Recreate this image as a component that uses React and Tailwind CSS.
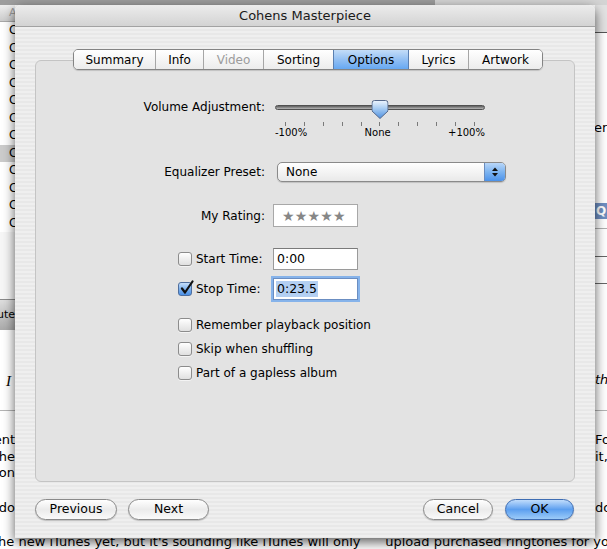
import React from "react";

function Checkbox({ checked }) {
  if (checked) {
    return (
      <div className="relative w-[14px] h-[14px] shrink-0 rounded-[3px] border border-[#4e6e9e] bg-linear-to-b from-[#c6def9] via-[#7fb3ee] to-[#4a8fe6]">
        <svg className="absolute -top-[3px] left-[1px]" width="14" height="15" viewBox="0 0 14 15">
          <path d="M2 8.5 L5 12.5 L12.5 1.5" fill="none" stroke="#111" strokeWidth="2.2" strokeLinecap="round" strokeLinejoin="round" />
        </svg>
      </div>
    );
  }
  return (
    <div className="w-[14px] h-[14px] shrink-0 rounded-[3px] border border-[#8c8c8c] bg-linear-to-b from-[#ffffff] to-[#e0e0e0] shadow-[0_1px_0_rgba(255,255,255,0.6)]" />
  );
}

function Tab({ label, className }) {
  return (
    <div className={className}>
      <span>{label}</span>
    </div>
  );
}

function PillButton({ children, className }) {
  return (
    <div className={className}>
      <span>{children}</span>
    </div>
  );
}

function Knob() {
  return (
    <svg width="17" height="19" viewBox="0 0 17 19">
      <defs>
        <linearGradient id="kg" x1="0" y1="0" x2="0" y2="1">
          <stop offset="0" stopColor="#eef5fd" />
          <stop offset="0.45" stopColor="#a6cbf2" />
          <stop offset="1" stopColor="#4e90e0" />
        </linearGradient>
      </defs>
      <path d="M3 0.5 H14 A2.5 2.5 0 0 1 16.5 3 V11 L8.5 18.5 L0.5 11 V3 A2.5 2.5 0 0 1 3 0.5 Z" fill="url(#kg)" stroke="#56698b" />
    </svg>
  );
}

export default function App() {
  const rows = Array.from({ length: 12 });
  const ticks = Array.from({ length: 11 });
  return (
    <div className="relative w-[607px] h-[549px] overflow-hidden bg-white font-['DejaVu_Sans',sans-serif] text-black flex flex-col">
      {/* top strip of background window */}
      <div className="h-[5px] shrink-0 flex">
        <div className="w-[435px] bg-[#9d9d9d]" />
        <div className="flex-1 bg-[#d4d4d4]" />
      </div>

      {/* background page columns */}
      <div className="flex h-[526px] shrink-0">
        {/* left column */}
        <div className="w-[15px] flex flex-col">
          <div className="h-[17px] shrink-0 bg-linear-to-b from-[#eeeeee] to-[#cccccc] border-b border-[#a8a8a8] pl-[9px] text-[11px] leading-[16px] text-[#9a9a9a]">A</div>
          {rows.map((_, i) => (
            <div
              key={i}
              className={i === 7 ? "h-[17.5px] shrink-0 bg-[#cbcbcb] pl-[9px] text-[12px] leading-[17.5px]" : "h-[17.5px] shrink-0 bg-white pl-[9px] text-[12px] leading-[17.5px]"}
            >
              C
            </div>
          ))}
          <div className="h-[67px] shrink-0 bg-[#f6f6f6]" />
          <div className="h-[31px] shrink-0 border-t border-[#8a8a8a] bg-linear-to-b from-[#dedede] to-[#aaaaaa] flex justify-end items-center text-[11px] whitespace-nowrap">
            ute
          </div>
          <div className="h-[80px] shrink-0 bg-white pl-[6px] pt-[43px] text-[15px] leading-[16px] italic font-['Liberation_Serif',serif]">I</div>
          <div className="h-[1px] shrink-0 bg-[#b4b4b4]" />
          <div className="h-[120px] shrink-0 bg-white pt-[21px] text-[13px] leading-[16.5px] flex flex-col items-end whitespace-nowrap">
            <div>ent</div>
            <div>he</div>
            <div>on</div>
            <div className="mt-[18px]">do</div>
          </div>
        </div>

        {/* middle (hidden by dialog) */}
        <div className="flex-1 bg-white" />

        {/* right column */}
        <div className="w-[12px] flex flex-col text-[13px] whitespace-nowrap">
          <div className="h-[27px] shrink-0 bg-[#e2e2e2]" />
          <div className="h-[1px] shrink-0 bg-[#555555]" />
          <div className="h-[87px] shrink-0" />
          <div className="h-[16px] shrink-0 leading-[16px] -ml-[1px]">er</div>
          <div className="h-[67px] shrink-0" />
          <div className="h-[16px] shrink-0 bg-[#6f8fc2] text-white text-[12px] leading-[16px] pl-[1px] font-bold">Q</div>
          <div className="h-[9px] shrink-0" />
          <div className="h-[1px] shrink-0 bg-[#b0b0b0]" />
          <div className="h-[27px] shrink-0" />
          <div className="h-[1px] shrink-0 bg-[#666666]" />
          <div className="h-[26px] shrink-0" />
          <div className="h-[1px] shrink-0 bg-[#666666]" />
          <div className="h-[88px] shrink-0" />
          <div className="h-[16px] shrink-0 leading-[16px] italic">thi</div>
          <div className="h-[22px] shrink-0" />
          <div className="h-[1px] shrink-0 bg-[#b4b4b4]" />
          <div className="h-[120px] shrink-0 pt-[21px] leading-[16.5px]">
            <div>Fo</div>
            <div>it,</div>
            <div className="mt-[34.5px]">do</div>
          </div>
        </div>
      </div>

      {/* bottom text line */}
      <div className="h-[18px] shrink-0 pt-[3px] flex justify-between text-[13px] leading-[16px] whitespace-nowrap">
        <span className="-ml-[7px]">the new iTunes yet, but it's sounding like iTunes will only</span>
        <span className="-mr-[2px]">upload purchased ringtones for yo</span>
      </div>

      {/* dialog window */}
      <div className="absolute left-[15px] top-[5px] w-[580px] h-[533px] rounded-t-[6px] overflow-hidden flex flex-col shadow-[0_4px_12px_rgba(0,0,0,0.65)]">
        <div className="h-[22px] shrink-0 bg-linear-to-b from-[#ececec] to-[#d3d3d3] border-b border-[#a2a2a2] text-center text-[13px] leading-[21px] text-[#1a1a1a]">
          Cohens Masterpiece
        </div>

        <div className="flex-1 flex flex-col px-[20px] pt-[22px] pb-[18px] bg-[repeating-linear-gradient(180deg,#efefef_0px,#efefef_2px,#e8e8e8_2px,#e8e8e8_4px)]">
          {/* tabs */}
          <div className="relative z-10 flex justify-center pl-[6px]">
            <div className="h-[21px] flex rounded-[5px] border border-[#848484] overflow-hidden text-[12px] shadow-[0_1px_1px_rgba(0,0,0,0.15)]">
              <Tab label="Summary" className="w-[81px] flex items-center justify-center bg-linear-to-b from-white to-[#ececec]" />
              <Tab label="Info" className="w-[48px] flex items-center justify-center border-l border-[#a6a6a6] bg-linear-to-b from-white to-[#ececec]" />
              <Tab label="Video" className="w-[60px] flex items-center justify-center border-l border-[#a6a6a6] bg-linear-to-b from-white to-[#ececec] text-[#9c9c9c]" />
              <Tab label="Sorting" className="w-[70px] flex items-center justify-center border-l border-[#a6a6a6] bg-linear-to-b from-white to-[#ececec]" />
              <Tab label="Options" className="w-[75px] flex items-center justify-center border-l border-[#5a7fb0] bg-linear-to-b from-[#c4ddf8] via-[#93c0f3] to-[#66a8f2]" />
              <Tab label="Lyrics" className="w-[60px] flex items-center justify-center border-l border-[#5a7fb0] bg-linear-to-b from-white to-[#ececec]" />
              <Tab label="Artwork" className="w-[74px] flex items-center justify-center border-l border-[#a6a6a6] bg-linear-to-b from-white to-[#ececec]" />
            </div>
          </div>

          {/* group box */}
          <div className="-mt-[10px] h-[422px] shrink-0 rounded-[6px] border border-[#c4c4c4] bg-[#e3e3e3] flex flex-col text-[12px]">
            {/* volume */}
            <div className="mt-[37px] flex items-start">
              <div className="w-[229px] text-right leading-[18px] whitespace-nowrap">Volume Adjustment:</div>
              <div className="ml-[10px] w-[210px] flex flex-col">
                <div className="relative h-[22px]">
                  <div className="mt-[7px] h-[5px] rounded-full border border-[#505050] bg-linear-to-b from-[#5e5e5e] to-[#b8b8b8]" />
                  <div className="absolute left-1/2 -translate-x-1/2 top-[2px] leading-none">
                    <Knob />
                  </div>
                </div>
                <div className="mt-[2px] h-[4px] px-[10px] flex justify-between">
                  {ticks.map((_, i) => (
                    <span key={i} className="w-px h-[4px] bg-[#7a7a7a]" />
                  ))}
                </div>
                <div className="mt-[1px] flex justify-between text-[10px] leading-[11px]">
                  <span>-100%</span>
                  <span>None</span>
                  <span>+100%</span>
                </div>
              </div>
            </div>

            {/* equalizer */}
            <div className="mt-[24px] h-[20px] flex items-center">
              <div className="w-[229px] text-right whitespace-nowrap">Equalizer Preset:</div>
              <div className="ml-[12px] w-[229px] h-[20px] flex rounded-[5px] border border-[#8a8a8a] overflow-hidden bg-linear-to-b from-white to-[#e9e9e9] shadow-[0_1px_1px_rgba(0,0,0,0.15)]">
                <div className="flex-1 pl-[8px] leading-[18px]">None</div>
                <div className="w-[21px] border-l border-[#6a8cbd] bg-linear-to-b from-[#b8d6f8] via-[#7db4f0] to-[#4b92ea] flex items-center justify-center">
                  <svg width="8" height="12" viewBox="0 0 8 12">
                    <path d="M1 5 L4 1.5 L7 5 Z" fill="#111" />
                    <path d="M1 7 L4 10.5 L7 7 Z" fill="#111" />
                  </svg>
                </div>
              </div>
            </div>

            {/* rating */}
            <div className="mt-[22px] h-[23px] flex items-center">
              <div className="w-[229px] text-right whitespace-nowrap">My Rating:</div>
              <div className="ml-[8px] w-[85px] h-[23px] bg-white border border-[#a8a8a8] flex items-center pl-[8px] text-[14px] tracking-[0.2px] text-[#878787] leading-none">
                ★★★★★
              </div>
            </div>

            {/* start time */}
            <div className="mt-[21px] h-[22px] pl-[142px] flex items-center">
              <Checkbox />
              <div className="ml-[4px] w-[77px] whitespace-nowrap">Start Time:</div>
              <div className="w-[85px] h-[22px] bg-white border border-[#9a9a9a] border-t-[#7a7a7a] pl-[3px] leading-[20px] text-[12.5px]">0:00</div>
            </div>

            {/* stop time */}
            <div className="mt-[8px] h-[22px] pl-[142px] flex items-center">
              <Checkbox checked />
              <div className="ml-[4px] w-[77px] whitespace-nowrap">Stop Time:</div>
              <div className="w-[85px] h-[22px] bg-white border border-[#6b8ec2] shadow-[0_0_0_2px_#86b3ea] pl-[2px] flex items-center text-[12.5px]">
                <span className="bg-[#b3cff2] px-[1px] leading-[16px]">0:23.5</span>
              </div>
            </div>

            {/* checkboxes */}
            <div className="mt-[16px] h-[18px] pl-[142px] flex items-center">
              <Checkbox />
              <div className="ml-[4px] whitespace-nowrap">Remember playback position</div>
            </div>
            <div className="mt-[6px] h-[18px] pl-[142px] flex items-center">
              <Checkbox />
              <div className="ml-[4px] whitespace-nowrap">Skip when shuffling</div>
            </div>
            <div className="mt-[6px] h-[18px] pl-[142px] flex items-center">
              <Checkbox />
              <div className="ml-[4px] whitespace-nowrap">Part of a gapless album</div>
            </div>
          </div>

          {/* buttons */}
          <div className="mt-[17px] h-[21px] flex pr-[1px] text-[12.5px]">
            <PillButton className="w-[82px] h-[21px] rounded-full border border-[#8a8a8a] bg-linear-to-b from-white via-[#ebebeb] to-[#fafafa] flex items-center justify-center shadow-[0_1px_1px_rgba(0,0,0,0.2)]">Previous</PillButton>
            <PillButton className="ml-[11px] w-[81px] h-[21px] rounded-full border border-[#8a8a8a] bg-linear-to-b from-white via-[#ebebeb] to-[#fafafa] flex items-center justify-center shadow-[0_1px_1px_rgba(0,0,0,0.2)]">Next</PillButton>
            <div className="flex-1" />
            <PillButton className="w-[70px] h-[21px] rounded-full border border-[#8a8a8a] bg-linear-to-b from-white via-[#ebebeb] to-[#fafafa] flex items-center justify-center shadow-[0_1px_1px_rgba(0,0,0,0.2)]">Cancel</PillButton>
            <PillButton className="ml-[12px] w-[69px] h-[21px] rounded-full border border-[#3e6db3] bg-linear-to-b from-[#c0dcfb] via-[#5c9fef] to-[#9ccbf8] flex items-center justify-center shadow-[0_1px_1px_rgba(0,0,0,0.25)]">OK</PillButton>
          </div>
        </div>
      </div>
    </div>
  );
}
